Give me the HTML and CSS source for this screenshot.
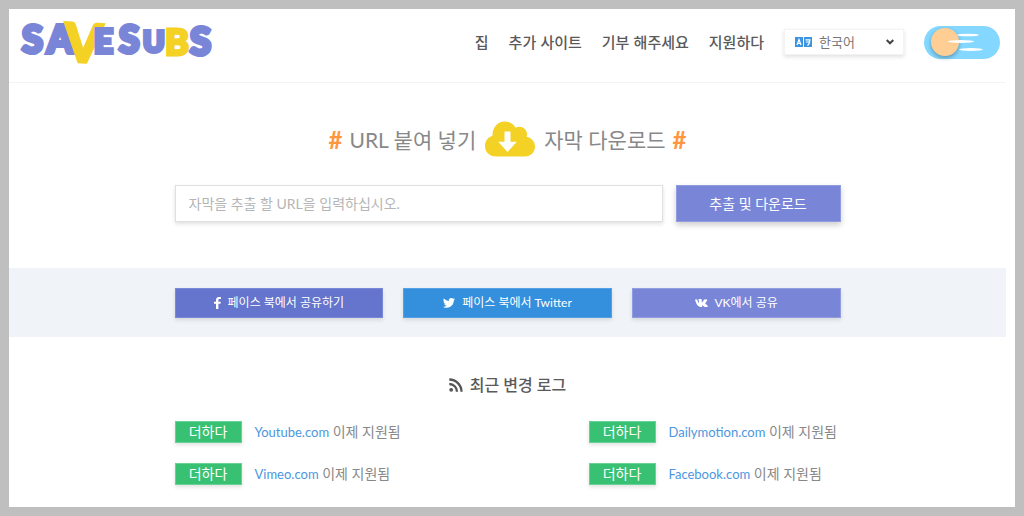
FILE: index.html
```html
<!DOCTYPE html>
<html lang="ko">
<head>
<meta charset="utf-8">
<meta name="viewport" content="width=device-width, initial-scale=1">
<title>SaveSubs</title>
<link rel="stylesheet" href="styles.css">
</head>
<body>
<div class="page">
  <header class="header">
    <a class="logo" href="#" aria-label="SaveSubs">
      <svg class="logo-art" width="194" height="46" viewBox="0 0 194 46">
        <g class="logo-purple">
          <text x="0" y="34" font-size="38">S</text>
          <text x="25" y="34" font-size="37">A</text>
          <text x="97" y="34" font-size="37">S</text>
          <text x="121" y="33" font-size="29">U</text>
          <text x="168" y="36" font-size="38">S</text>
        </g>
        <g class="logo-yellow">
          <text x="43" y="43" font-size="53" transform="rotate(3 63 20)">V</text>
          <text x="143" y="36" font-size="36">B</text>
        </g>
        <g class="logo-purple"><text x="72" y="34" font-size="33">E</text></g>
      </svg>
    </a>
    <nav class="nav">
      <a href="#">집</a>
      <a href="#">추가 사이트</a>
      <a href="#">기부 해주세요</a>
      <a href="#">지원하다</a>
    </nav>
    <div class="language">
      <svg class="language-icon" width="17" height="10" viewBox="0 0 17 10" aria-hidden="true">
        <path fill="#3b94e0" d="M0 0h8v10H0zM9 0h8v10H9z"/>
        <path d="M2 8 4 2.500 6 8M2.800 6.300h2.400M10.500 2.800h5M10.800 5h4.400M14.700 3C14.700 6 14 7.500 12.500 8.500" fill="none" stroke="#fff" stroke-width="1.200"/>
      </svg>
      <select class="language-select" aria-label="언어"><option>한국어</option></select>
      <svg class="language-arrow" width="8" height="6" viewBox="0 0 8 6" aria-hidden="true"><path d="M.7 1 4 4.300 7.300 1" fill="none" stroke="#444" stroke-width="2"/></svg>
    </div>
    <label class="theme">
      <input class="theme-input" type="checkbox" aria-label="테마">
      <svg class="theme-clouds" width="36" height="18" viewBox="0 0 36 18" aria-hidden="true">
        <g fill="#fff"><ellipse cx="20" cy="2" rx="11" ry="1.300"/><ellipse cx="13" cy="8.500" rx="13" ry="1.400"/><ellipse cx="23" cy="16.500" rx="12" ry="1.400"/></g>
      </svg>
    </label>
  </header>

  <main>
    <section class="hero">
      <h1 class="title">
        <span class="hash">#</span>
        <span>URL 붙여 넣기</span>
        <svg class="cloud" width="50" height="36" viewBox="0 0 50 36" aria-hidden="true">
          <path fill="#f4d125" d="M11 35.500C4.500 35.500 0 31 0 25c0-5 3-8.700 7.500-10.200C7.300 6.500 12.500.5 19.700.5c4.800 0 8.800 2.300 10.900 6.200C35.500 3.800 42 7.500 42 13c0 1-.2 2-.5 2.700C46.500 16.600 50 20.600 50 25.500c0 5.700-4.400 10-10 10z"/>
          <path fill="#fff" d="M19.500 10.500h6v10.300h6.300L22.500 31l-9.300-10.200h6.300z"/>
        </svg>
        <span>자막 다운로드</span>
        <span class="hash">#</span>
      </h1>
      <form class="search">
        <input class="search-input" type="text" aria-label="URL" placeholder="자막을 추출 할 URL을 입력하십시오.">
        <button class="search-button" type="button">추출 및 다운로드</button>
      </form>
    </section>

    <section class="share">
      <div class="share-list">
        <a class="share-link facebook" href="#">
          <svg width="7" height="12" viewBox="0 0 7 12" aria-hidden="true"><path fill="#fff" d="M2 12V6.800H0V4.700h2V3C2 1 3.200 0 5 0c.9 0 1.700.1 1.900.1v2H5.600c-1 0-1.200.5-1.200 1.200v1.400h2.400l-.3 2.100H4.400V12z"/></svg>
          <span>페이스 북에서 공유하기</span>
        </a>
        <a class="share-link twitter" href="#">
          <svg width="12" height="10" viewBox="0 0 24 20" aria-hidden="true"><path fill="#fff" d="M24 2.400a10 10 0 0 1-2.800.8A5 5 0 0 0 23.300.4a10 10 0 0 1-3.100 1.200A4.900 4.900 0 0 0 11.800 6 14 14 0 0 1 1.700.900a4.900 4.900 0 0 0 1.500 6.600A5 5 0 0 1 1 6.900a4.900 4.900 0 0 0 3.900 4.900 5 5 0 0 1-2.200.1 4.900 4.900 0 0 0 4.600 3.400A9.900 9.900 0 0 1 0 17.300 14 14 0 0 0 21.500 4.900 10 10 0 0 0 24 2.400z"/></svg>
          <span>페이스 북에서 Twitter</span>
        </a>
        <a class="share-link vk" href="#">
          <svg width="13" height="8" viewBox="0 0 26 16" aria-hidden="true"><path fill="#fff" d="M0 1h4.500c.7 3 2 5.800 3.500 7.300V3.500L6.600 1.200C7.500 0 9 0 10.500 0c2 0 3 .5 3 2v5.300C15.500 6 17 3.500 18 1h5.200c1.600 0 1.500 1 .8 2.300-1 1.800-2.500 3.300-3.700 5.200 1.600 2 4.200 3.700 5.200 5.700.5 1-.2 1.800-1.500 1.800h-4c-2 0-3.500-3.500-5.500-4.200V14c0 1.500-.8 2-2.500 2C6 16 2 10 0 1z"/></svg>
          <span>VK에서 공유</span>
        </a>
      </div>
    </section>

    <section class="changes">
      <h2 class="changes-title">
        <svg width="14" height="14" viewBox="0 0 14 14" aria-hidden="true"><circle cx="2.200" cy="11.800" r="1.900" fill="#555"/><path d="M.3 6A7.700 7.700 0 0 1 8 13.700M.3 1.500A12.200 12.200 0 0 1 12.500 13.700" fill="none" stroke="#555" stroke-width="2.300"/></svg>
        <span>최근 변경 로그</span>
      </h2>
      <ul class="change-list">
        <li class="change"><span class="badge">더하다</span><span><a href="#">Youtube.com</a> 이제 지원됨</span></li>
        <li class="change"><span class="badge">더하다</span><span><a href="#">Dailymotion.com</a> 이제 지원됨</span></li>
        <li class="change"><span class="badge">더하다</span><span><a href="#">Vimeo.com</a> 이제 지원됨</span></li>
        <li class="change"><span class="badge">더하다</span><span><a href="#">Facebook.com</a> 이제 지원됨</span></li>
      </ul>
    </section>
  </main>
</div>
</body>
</html>
```

FILE: styles.css
```css
* { box-sizing: border-box; }

body {
  margin: 0;
  padding: 9px;
  background: #bfbfbf;
  color: #888;
  font-family: Lato, "Noto Sans CJK KR", sans-serif;
  font-size: 14px;
  line-height: 20px;
}

a { color: #4c97e0; text-decoration: none; }
input, button, select { font: inherit; }

.page {
  min-height: calc(100vh - 18px);
  padding-right: 9px;
  background: #fff;
}

.header {
  display: flex;
  align-items: center;
  height: 74px;
  padding: 0 6px 7px 13px;
  border-bottom: 1px solid #f4f4f4;
}

.logo { display: block; margin-right: auto; }
.logo-art { display: block; overflow: visible; font-family: Lato, sans-serif; font-weight: 900; }
.logo-purple { fill: #7986d8; stroke: #7986d8; stroke-width: 4px; }
.logo-yellow { fill: #f4d125; stroke: #f4d125; stroke-width: 3px; }

.nav { display: flex; gap: 20px; margin-right: 20px; }
.nav a { color: #5a5a5a; font-size: 15px; font-weight: 500; font-family: "Noto Sans CJK KR", sans-serif; }

.language { position: relative; margin-right: 20px; }
.language-select {
  display: block;
  width: 120px;
  height: 26px;
  padding: 0 20px 0 34px;
  appearance: none;
  border: 1px solid #f3f3f3;
  border-radius: 0;
  background: #fff;
  box-shadow: 0 2px 4px rgba(0, 0, 0, .12);
  color: #777;
  font-size: 13px;
}
.language-icon { position: absolute; top: 8px; left: 11px; }
.language-arrow { position: absolute; top: 10px; right: 10px; }

.theme { position: relative; display: block; }
.theme-input {
  display: block;
  width: 76px;
  height: 33px;
  margin: 0;
  padding: 2px 7px;
  appearance: none;
  border-radius: 17px;
  background: #84d8ff;
}
.theme-input::before {
  content: "";
  display: block;
  width: 28px;
  height: 28px;
  border-radius: 50%;
  background: #ffce94;
  box-shadow: 0 2px 4px rgba(0, 0, 0, .3);
}
.theme-clouds { position: absolute; top: 7px; left: 24px; pointer-events: none; }

.hero { max-width: 666px; margin: 0 auto; padding: 38px 0 46px; }
.title {
  display: flex;
  justify-content: center;
  align-items: flex-end;
  gap: 9px;
  margin: 0 0 28px;
  font-size: 21px;
  font-weight: 400;
  line-height: 34px;
}
.title .hash { margin: 0 -2px; color: #ff9640; font-size: 24px; font-weight: 700; }

.search { display: flex; gap: 13px; }
.search-input {
  flex: 1;
  min-width: 0;
  height: 37px;
  padding: 0 13px;
  border: 1px solid #e0e0e0;
  border-radius: 0;
  box-shadow: 0 2px 4px rgba(0, 0, 0, .12);
}
.search-input::placeholder { color: #b5b5b5; }
.search-button {
  width: 165px;
  height: 37px;
  border: 1px solid #929ddf;
  background: #7986d8;
  box-shadow: 0 3px 6px rgba(0, 0, 0, .2);
  color: #fff;
}

.share { padding: 20px 0 19px; background: #f0f4f8; }
.share-list {
  display: grid;
  grid-template-columns: repeat(3, 1fr);
  gap: 20px;
  max-width: 666px;
  margin: 0 auto;
}
.share-link {
  display: flex;
  justify-content: center;
  align-items: center;
  gap: 7px;
  height: 30px;
  border: 1px solid;
  box-shadow: 0 2px 4px rgba(0, 0, 0, .12);
  color: #fff;
  font-size: 12px;
  line-height: 22px;
}
.facebook { border-color: #7b88d8; background: #6574cd; }
.twitter { border-color: #54a2e5; background: #3490dc; }
.vk { border-color: #929ddf; background: #7986d8; }

.changes { max-width: 666px; margin: 0 auto; padding: 36px 0 22px; }
.changes-title {
  display: flex;
  justify-content: center;
  align-items: center;
  gap: 7px;
  margin: 0 0 24px;
  color: #5a5a5a;
  font-size: 16px;
  font-weight: 500;
  font-family: Lato, "Noto Sans CJK KR", sans-serif;
  line-height: 24px;
}
.change-list {
  display: grid;
  grid-template-columns: 1fr 252px;
  gap: 20px 0;
  margin: 0;
  padding: 0;
  list-style: none;
}
.change { display: flex; align-items: center; gap: 13px; }
.change a { font-size: 13px; }
.badge {
  width: 67px;
  border: 1px solid #69d096;
  background: #38c172;
  box-shadow: 0 2px 4px rgba(0, 0, 0, .12);
  color: #fff;
  text-align: center;
}
```
